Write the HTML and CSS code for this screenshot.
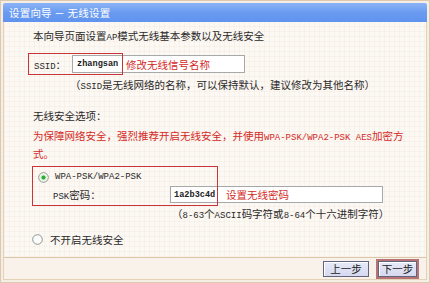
FILE: index.html
```html
<!DOCTYPE html>
<html lang="zh-CN">
<head>
<meta charset="utf-8">
<title>设置向导 - 无线设置</title>
<link rel="stylesheet" href="styles.css">
</head>
<body>
<div class="win">
  <div class="title">设置向导 － 无线设置</div>
  <div class="body">
    <p class="intro">本向导页面设置<span class="m">AP</span>模式无线基本参数以及无线安全</p>
    <div class="ssid-row">
      <span class="lbl"><span class="m">SSID</span>：</span>
      <div class="field ssid-field"><span class="val ssid-val">zhangsan</span><span class="anno">修改无线信号名称</span></div>
      <div class="mark ssid-mark"></div>
    </div>
    <p class="note ssid-note">（<span class="m">SSID</span>是无线网络的名称，可以保持默认，建议修改为其他名称）</p>
    <p class="sec">无线安全选项：</p>
    <p class="warn">为保障网络安全，强烈推荐开启无线安全，并使用<span class="m">WPA-PSK/WPA2-PSK AES</span>加密方<br>式。</p>
    <div class="opt-group">
      <div class="mark wpa-mark"></div>
      <div class="radio-row on">
        <svg class="radio" width="11" height="11" viewBox="0 0 11 11"><circle cx="5.5" cy="5.5" r="4.8" fill="#fafcfa" stroke="#8a9590" stroke-width="1"/><circle cx="5.5" cy="5.5" r="3.1" fill="#c9efc4"/><circle cx="5.5" cy="5.5" r="2" fill="#2fa838"/></svg>
        <span class="m">WPA-PSK/WPA2-PSK</span>
      </div>
      <div class="psk-row">
        <span class="psk-lbl"><span class="m">PSK</span>密码：</span>
        <div class="field psk-field"><span class="val psk-val">1a2b3c4d</span><span class="anno">设置无线密码</span></div>
      </div>
      <p class="note psk-note">（<span class="m">8-63</span>个<span class="m">ASCII</span>码字符或<span class="m">8-64</span>个十六进制字符）</p>
    </div>
    <div class="radio-row off">
      <svg class="radio" width="11" height="11" viewBox="0 0 11 11"><circle cx="5.5" cy="5.5" r="4.8" fill="#fcfcfc" stroke="#8a9590" stroke-width="1"/></svg>
      <span>不开启无线安全</span>
    </div>
  </div>
  <div class="foot">
    <button class="btn">上一步</button>
    <span class="focus"><button class="btn">下一步</button></span>
  </div>
</div>
</body>
</html>
```

FILE: styles.css
```css
* { box-sizing: border-box; }
html, body { margin: 0; padding: 0; background: #fbf7f2; }
body {
  font-family: "Noto Sans CJK SC", "Noto Sans", sans-serif;
  font-size: 10.5px;
  color: #2a2a2a;
}
p { margin: 0; }
.m {
  font-family: "Liberation Mono", "DejaVu Sans Mono", monospace;
  font-size: 9px;
}
.win {
  width: 430px;
  height: 283px;
  border: 1px solid #dccab0;
  padding: 2px;
  background: #f6eee4;
  display: flex;
  flex-direction: column;
}
.title {
  height: 19px;
  line-height: 19px;
  padding-left: 6px;
  color: #fff;
  background: linear-gradient(#8cb3f6, #6a9bf1 50%, #5f93ee);
  border-radius: 2px 2px 0 0;
  letter-spacing: 0.2px;
}
.body {
  height: 235px;
  border-left: 1px solid #e3d2b8;
  border-right: 1px solid #e3d2b8;
  padding: 7px 0 0 29px;
  background-color: #fcf8f3;
  background-image:
    repeating-linear-gradient(0deg, rgba(225, 205, 185, 0.14) 0 1px, transparent 1px 5px),
    repeating-linear-gradient(90deg, rgba(225, 205, 185, 0.14) 0 1px, transparent 1px 5px);
}
.intro { line-height: 14px; }
.ssid-row {
  position: relative;
  margin-top: 8px;
  height: 22px;
  display: flex;
  align-items: center;
}
.lbl { width: 39px; padding-left: 1px; }
.field {
  height: 18px;
  background: #fff;
  border: 1px solid #a8a8a8;
  display: flex;
  align-items: center;
  white-space: nowrap;
}
.ssid-field { width: 173px; }
.val {
  font-family: "Liberation Mono", "DejaVu Sans Mono", monospace;
  font-size: 8.6px;
  font-weight: bold;
  color: #222;
  padding-left: 4px;
}
.ssid-val { width: 53px; }
.anno { color: #d42a26; }
.mark {
  position: absolute;
  border: 1px solid #c8343a;
  pointer-events: none;
}
.ssid-mark { left: -5px; top: 0; width: 95px; height: 22px; }
.note { line-height: 14px; }
.ssid-note { margin: 3px 0 0 37px; }
.sec { margin-top: 15px; line-height: 14px; }
.warn { margin-top: 5px; line-height: 16px; color: #d42a26; }
.opt-group {
  position: relative;
  margin-top: 4px;
  padding-top: 4px;
}
.wpa-mark { left: -1px; top: 0; width: 186px; height: 40px; }
.radio-row {
  display: flex;
  align-items: center;
  height: 14px;
}
.radio-row.on { padding-left: 5px; gap: 6px; }
.radio-row.off { margin-top: 9px; margin-left: -1px; gap: 7px; }
.radio { display: block; flex: none; }
.psk-row {
  margin-top: 2px;
  display: flex;
  align-items: center;
  height: 17px;
}
.psk-lbl { width: 137px; padding-left: 20px; }
.psk-field { width: 213px; height: 17px; }
.psk-val { width: 55px; padding-left: 3px; }
.psk-note { margin: 4px 0 0 139px; }
.foot {
  flex: 1;
  border-top: 1px solid #dcc8a8;
  border-left: 1px solid #e3d2b8;
  border-right: 1px solid #e3d2b8;
  border-bottom: 1px solid #e3d2b8;
  background: #f8f2ea;
  display: flex;
  justify-content: flex-end;
  align-items: center;
  gap: 7px;
  padding-right: 7px;
}
.btn {
  font-family: "Noto Sans CJK SC", sans-serif;
  font-size: 10.5px;
  color: #1c1c1c;
  height: 16px;
  width: 46px;
  padding: 0;
  line-height: 14px;
  background: linear-gradient(#e8eaf8, #d6d9ef);
  border: 1px solid #62657a;
  box-shadow: inset 1px 1px 0 #fff;
}
.focus {
  display: flex;
  border: 2px solid #b87474;
  padding: 0;
}
.focus .btn { width: 39px; }
```
